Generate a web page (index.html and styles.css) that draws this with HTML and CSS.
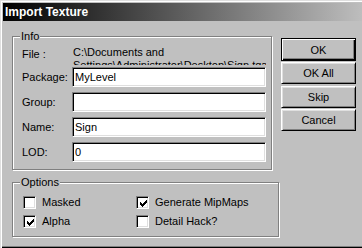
FILE: index.html
```html
<!DOCTYPE html>
<html>
<head>
<meta charset="utf-8">
<link rel="stylesheet" href="styles.css">
</head>
<body>
<div class="window">
  <div class="titlebar">Import Texture</div>
  <div class="client">
    <div class="left-col">
      <div class="group info">
        <span class="caption">Info</span>
        <div class="file-row">
          <span class="label file-label">File :</span>
          <div class="path">C:\Documents and Settings\Administrator\Desktop\Sign.tga</div>
        </div>
        <div class="fields">
          <div class="field-row"><span class="label">Package:</span><input class="edit" type="text" value="MyLevel"></div>
          <div class="field-row"><span class="label">Group:</span><input class="edit" type="text" value=""></div>
          <div class="field-row"><span class="label">Name:</span><input class="edit" type="text" value="Sign"></div>
          <div class="field-row"><span class="label">LOD:</span><input class="edit" type="text" value="0"></div>
        </div>
      </div>
      <div class="group options">
        <span class="caption">Options</span>
        <div class="check-grid">
          <div class="check"><span class="box"></span><span>Masked</span></div>
          <div class="check"><span class="box"><svg width="9" height="9" viewBox="0 0 9 9" shape-rendering="crispEdges"><path d="M1 3h1v3H1zM2 4h1v3H2zM3 5h1v3H3zM4 4h1v3H4zM5 3h1v3H5zM6 2h1v3H6zM7 1h1v3H7z" fill="#000"/></svg></span><span>Generate MipMaps</span></div>
          <div class="check"><span class="box"><svg width="9" height="9" viewBox="0 0 9 9" shape-rendering="crispEdges"><path d="M1 3h1v3H1zM2 4h1v3H2zM3 5h1v3H3zM4 4h1v3H4zM5 3h1v3H5zM6 2h1v3H6zM7 1h1v3H7z" fill="#000"/></svg></span><span>Alpha</span></div>
          <div class="check"><span class="box"></span><span>Detail Hack?</span></div>
        </div>
      </div>
    </div>
    <div class="buttons">
      <button class="btn default">OK</button>
      <button class="btn">OK All</button>
      <button class="btn">Skip</button>
      <button class="btn">Cancel</button>
    </div>
  </div>
</div>
</body>
</html>
```

FILE: styles.css
```css
html, body {
  margin: 0;
  padding: 0;
  overflow: hidden;
  background: #c0c0c0;
}

body {
  width: 362px;
  height: 248px;
  font-family: "Liberation Sans", Arial, sans-serif;
  font-size: 11px;
  color: #000;
}

.window {
  width: 370px;
  height: 248px;
  box-sizing: border-box;
  padding: 3px;
  background: #c0c0c0;
  box-shadow: inset 1px 1px 0 #dfdfdf, inset 2px 2px 0 #fff, inset -1px -1px 0 #000, inset -2px -2px 0 #808080;
}

.titlebar {
  height: 18px;
  line-height: 18px;
  padding-left: 2px;
  color: #fff;
  font-weight: bold;
  font-size: 12px;
  background: linear-gradient(to right, #000 0%, #c0c0c0 100%);
  white-space: nowrap;
}

.client {
  display: flex;
  padding: 15px 0 0 9px;
}

.left-col {
  display: flex;
  flex-direction: column;
  gap: 12px;
  width: 267px;
}

.group {
  position: relative;
  box-sizing: border-box;
  border: 1px solid #808080;
  box-shadow: inset 1px 1px 0 #fff, 1px 1px 0 #fff;
}

.caption {
  position: absolute;
  top: -7px;
  left: 7px;
  padding: 0 1px;
  line-height: 13px;
  background: #c0c0c0;
}

.info {
  width: 260px;
  height: 134px;
  padding: 9px 0 0 9px;
}

.file-row {
  display: flex;
}

.label {
  width: 50px;
  flex: none;
  line-height: 13px;
}

.file-label {
  padding-top: 2px;
}

.path {
  width: 193px;
  height: 19px;
  padding-left: 1px;
  line-height: 13px;
  overflow: hidden;
}

.fields {
  display: flex;
  flex-direction: column;
  gap: 5px;
  margin-top: 2px;
}

.field-row {
  display: flex;
  align-items: center;
}

.edit {
  width: 194px;
  height: 20px;
  box-sizing: border-box;
  margin: 0;
  padding: 0 2px;
  border: 1px solid;
  border-color: #808080 #fff #fff #808080;
  box-shadow: inset 1px 1px 0 #000, inset -1px -1px 0 #dfdfdf;
  background: #fff;
  font-family: "Liberation Sans", Arial, sans-serif;
  font-size: 11px;
  color: #000;
  outline: none;
}

.options {
  width: 267px;
  height: 55px;
  padding: 13px 0 0 10px;
}

.check-grid {
  display: grid;
  grid-template-columns: 113px 120px;
  grid-auto-rows: 19px;
}

.check {
  display: flex;
  align-items: flex-start;
  gap: 6px;
  line-height: 13px;
  white-space: nowrap;
}

.box {
  width: 13px;
  height: 13px;
  box-sizing: border-box;
  flex: none;
  display: flex;
  align-items: center;
  justify-content: center;
  background: #fff;
  border: 1px solid;
  border-color: #808080 #fff #fff #808080;
  box-shadow: inset 1px 1px 0 #000, inset -1px -1px 0 #dfdfdf;
}

.box svg {
  display: block;
  margin: 1px 0 0 1px;
}

.buttons {
  display: flex;
  flex-direction: column;
  gap: 1.33px;
  margin: 2px 0 0 2px;
}

.btn {
  width: 75px;
  height: 22px;
  box-sizing: border-box;
  margin: 0;
  padding: 0;
  background: #c0c0c0;
  border: 1px solid;
  border-color: #fff #000 #000 #fff;
  box-shadow: inset 1px 1px 0 #dfdfdf, inset -1px -1px 0 #808080;
  font-family: "Liberation Sans", Arial, sans-serif;
  font-size: 11px;
  color: #000;
}

.btn.default {
  height: 23px;
  border-color: #000;
  box-shadow: inset 1px 1px 0 #fff, inset -1px -1px 0 #000, inset -2px -2px 0 #808080;
}
```
